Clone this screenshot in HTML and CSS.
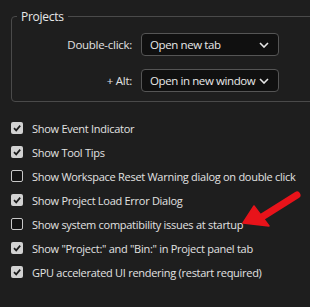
FILE: index.html
```html
<!DOCTYPE html>
<html>
<head>
<meta charset="utf-8">
<link rel="stylesheet" href="styles.css">
</head>
<body>
<div class="page">
  <fieldset class="group">
    <legend class="legend">Projects</legend>
    <div class="form">
      <span class="label">Double-click:</span>
      <div class="select"><span>Open new tab</span><svg class="chev" viewBox="0 0 10 6" width="10" height="6"><path d="M1 1 L5 5 L9 1" fill="none" stroke="#e6e6e6" stroke-width="1.6"/></svg></div>
      <span class="label">+ Alt:</span>
      <div class="select"><span>Open in new window</span><svg class="chev" viewBox="0 0 10 6" width="10" height="6"><path d="M1 1 L5 5 L9 1" fill="none" stroke="#e6e6e6" stroke-width="1.6"/></svg></div>
    </div>
  </fieldset>
  <ul class="checks">
    <li class="row"><span class="box on"><svg viewBox="0 0 12 12" width="12" height="12"><path d="M3 6.2 L5.2 8.4 L9.2 3.6" fill="none" stroke="#1b1b1b" stroke-width="1.7"/></svg></span>Show Event Indicator</li>
    <li class="row"><span class="box on"><svg viewBox="0 0 12 12" width="12" height="12"><path d="M3 6.2 L5.2 8.4 L9.2 3.6" fill="none" stroke="#1b1b1b" stroke-width="1.7"/></svg></span>Show Tool Tips</li>
    <li class="row"><span class="box off"></span>Show Workspace Reset Warning dialog on double click</li>
    <li class="row"><span class="box on"><svg viewBox="0 0 12 12" width="12" height="12"><path d="M3 6.2 L5.2 8.4 L9.2 3.6" fill="none" stroke="#1b1b1b" stroke-width="1.7"/></svg></span>Show Project Load Error Dialog</li>
    <li class="row"><span class="box off"></span>Show system compatibility issues at startup</li>
    <li class="row"><span class="box on"><svg viewBox="0 0 12 12" width="12" height="12"><path d="M3 6.2 L5.2 8.4 L9.2 3.6" fill="none" stroke="#1b1b1b" stroke-width="1.7"/></svg></span>Show "Project:" and "Bin:" in Project panel tab</li>
    <li class="row"><span class="box on"><svg viewBox="0 0 12 12" width="12" height="12"><path d="M3 6.2 L5.2 8.4 L9.2 3.6" fill="none" stroke="#1b1b1b" stroke-width="1.7"/></svg></span>GPU accelerated UI rendering (restart required)</li>
  </ul>
  <svg class="arrow" viewBox="0 0 310 307" width="310" height="307">
    <path d="M297 195 L262 217" stroke="#e8131a" stroke-width="7" stroke-linecap="round" fill="none"/>
    <path d="M243 223 L254 206 L269 226 Z" fill="#e8131a" stroke="#e8131a" stroke-width="1.5" stroke-linejoin="round"/>
  </svg>
</div>
</body>
</html>
```
FILE: styles.css
```css
html, body {
  margin: 0;
  padding: 0;
  background: #1e1e1e;
  overflow: hidden;
}
.page {
  position: relative;
  width: 310px;
  height: 307px;
  overflow: hidden;
  font-family: "Open Sans", "Noto Sans", sans-serif;
  font-size: 11px;
  letter-spacing: -0.28px;
  color: #e2e2e2;
}
.group {
  margin: 8px 0 0 11px;
  width: 330px;
  box-sizing: border-box;
  border: 1px solid #4a4a4a;
  border-radius: 4px;
  padding: 8px 0 9px 0;
}
.legend {
  padding: 0 4px;
  margin-left: 5px;
  font-size: 12px;
  color: #e8e8e8;
}
.form {
  display: grid;
  grid-template-columns: 120px 138px;
  column-gap: 9px;
  row-gap: 13px;
  align-items: center;
}
.label {
  text-align: right;
  font-size: 11.5px;
}
.select {
  height: 23px;
  box-sizing: border-box;
  border: 1px solid #555;
  border-radius: 4px;
  background: #101010;
  display: flex;
  align-items: center;
  justify-content: space-between;
  padding: 0 9px 0 8px;
  font-size: 11.5px;
  letter-spacing: -0.4px;
  white-space: nowrap;
  color: #e8e8e8;
}
.checks {
  list-style: none;
  margin: 14px 0 0 0;
  padding: 0 0 0 11px;
}
.row {
  height: 24px;
  display: flex;
  align-items: center;
  gap: 9px;
  white-space: nowrap;
}
.box {
  width: 12px;
  height: 12px;
  box-sizing: border-box;
  border-radius: 2px;
  flex: none;
  display: flex;
}
.box.on {
  background: #d2d2d2;
}
.box.off {
  background: #121212;
  border: 1.5px solid #c8c8c8;
}
.arrow {
  position: absolute;
  left: 0;
  top: 0;
  pointer-events: none;
}
```
